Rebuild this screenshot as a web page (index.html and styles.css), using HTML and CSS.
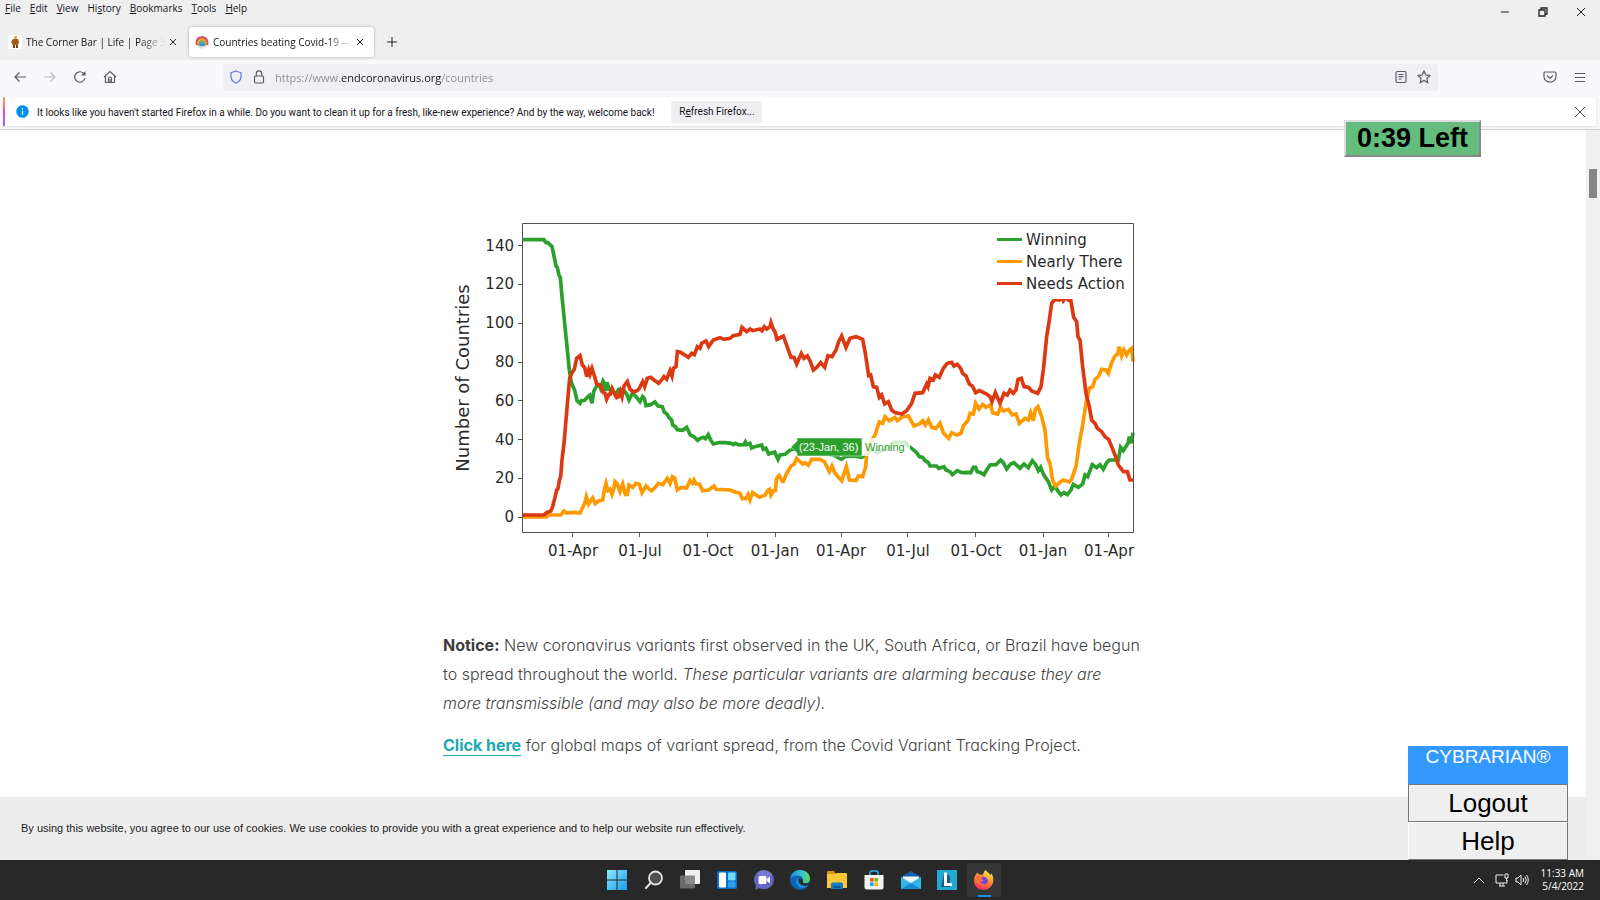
FILE: index.html
```html
<!DOCTYPE html>
<html lang="en">
<head>
<meta charset="utf-8">
<title>Countries beating Covid-19</title>
<link rel="stylesheet" href="styles.css">
</head>
<body>
<header class="browser">
  <div class="menubar">
    <nav class="menus">
      <button><u>F</u>ile</button><button><u>E</u>dit</button><button><u>V</u>iew</button><button>Hi<u>s</u>tory</button><button><u>B</u>ookmarks</button><button><u>T</u>ools</button><button><u>H</u>elp</button>
    </nav>
    <div class="window-controls">
      <button aria-label="Minimize"><svg width="10" height="10" viewBox="0 0 10 10"><path d="M1 5h8"/></svg></button>
      <button aria-label="Restore"><svg width="10" height="10" viewBox="0 0 10 10"><path d="M1 3h6v6H1zM3 3V1h6v6H7" stroke-width="1.3"/></svg></button>
      <button aria-label="Close"><svg width="10" height="10" viewBox="0 0 10 10"><path d="M1 1l8 8M9 1L1 9"/></svg></button>
    </div>
  </div>
  <div class="tabs">
    <div class="tab">
      <svg class="favicon" width="14" height="14" viewBox="0 0 14 14"><rect width="14" height="14" fill="#fff"/><path d="M6 1h3v3H6z" fill="#d8b060"/><path d="M5 4h5l1 3-1 3H5L3 7z" fill="#a35a12"/><path d="M5 10h2v3H5zM8 10h2v3H8z" fill="#704018"/></svg>
      <span class="tab-title">The Corner Bar | Life | Page 3100</span>
      <button class="tab-close" aria-label="Close tab"><svg width="8" height="8" viewBox="0 0 8 8"><path d="M1 1l6 6M7 1L1 7"/></svg></button>
    </div>
    <div class="tab active">
      <svg class="favicon" width="14" height="14" viewBox="0 0 14 14"><circle cx="7" cy="7" r="6.7" fill="#e8e2e5"/><path d="M1 10A6.4 6.4 0 1 1 13 10z" fill="#d94860"/><path d="M2.5 10.500A5 5 0 1 1 11.500 10.500z" fill="#f2a132"/><path d="M4 11A3.600 3.600 0 1 1 10 11z" fill="#6cb36a"/><path d="M5 11.300A2.600 2.600 0 1 1 9 11.300z" fill="#4296dd"/></svg>
      <span class="tab-title">Countries beating Covid-19 — E</span>
      <button class="tab-close" aria-label="Close tab"><svg width="8" height="8" viewBox="0 0 8 8"><path d="M1 1l6 6M7 1L1 7"/></svg></button>
    </div>
    <button class="new-tab" aria-label="New tab"><svg width="12" height="12" viewBox="0 0 12 12"><path d="M6 1v10M1 6h10"/></svg></button>
  </div>
  <div class="navbar">
    <div class="nav-buttons">
      <button aria-label="Back"><svg width="14" height="14" viewBox="0 0 14 14"><path d="M13 7H2M6.500 2.500L2 7l4.500 4.500"/></svg></button>
      <button aria-label="Forward" disabled><svg width="14" height="14" viewBox="0 0 14 14"><path d="M1 7h11M7.500 2.500L12 7l-4.500 4.500"/></svg></button>
      <button aria-label="Reload"><svg width="14" height="14" viewBox="0 0 14 14"><path d="M12 8a5.200 5.200 0 1 1-1.500-4.800L12 4.700"/><path d="M12.500 1v4.500H8z" fill="#5b5b66" stroke="none"/></svg></button>
      <button aria-label="Home"><svg width="14" height="14" viewBox="0 0 14 14"><path d="M1 7l6-5.500L13 7M2.500 6v6.500h9V6M5.500 12V8.500a1.500 1.500 0 0 1 3 0V12"/><path d="M7 9v3"/></svg></button>
    </div>
    <div class="urlbar">
      <svg width="14" height="14" viewBox="0 0 14 14"><path d="M7 1l5 1.800v3.700C12 10 9.500 12 7 13.200 4.500 12 2 10 2 6.500V2.800z" stroke="#6a70e8"/></svg>
      <svg width="14" height="14" viewBox="0 0 14 14"><rect x="2.500" y="6" width="9" height="7" rx="1.200"/><path d="M4.300 6V3.500a2.700 2.700 0 0 1 5.400 0V6"/></svg>
      <input class="url" type="text" aria-label="Address" value="https://www.endcoronavirus.org/countries">
      <button aria-label="Reader view"><svg width="14" height="14" viewBox="0 0 14 14"><rect x="2" y="1.500" width="10" height="11" rx="1.500"/><path d="M4.500 4.500h5M4.500 6.700h5M4.500 9h3"/></svg></button>
      <button aria-label="Bookmark"><svg width="14" height="14" viewBox="0 0 14 14"><path d="M7 1l1.800 3.900 4.200.5-3.100 2.900.8 4.300L7 10.500l-3.700 2.100.8-4.300L1 5.400l4.200-.5z"/></svg></button>
    </div>
    <div class="nav-end">
      <button aria-label="Pocket"><svg width="14" height="14" viewBox="0 0 14 14"><path d="M2 2h10a1 1 0 0 1 1 1v3.500a6 5.700 0 0 1-12 0V3a1 1 0 0 1 1-1zM4 5.500l3 2.800 3-2.800"/></svg></button>
      <button aria-label="Application menu"><svg width="12" height="12" viewBox="0 0 12 12"><path d="M1 2.500h10M1 6.500h10M1 10.500h10"/></svg></button>
    </div>
  </div>
  <div class="notice-wrap">
    <div class="notification">
      <svg width="13" height="13" viewBox="0 0 13 13"><circle cx="6.500" cy="6.500" r="6.300" fill="#0090ed"/><path d="M6.500 5.800v4M6.500 3v1.500" stroke="#fff" stroke-width="1.300"/></svg>
      <span class="notification-text">It looks like you haven't started Firefox in a while. Do you want to clean it up for a fresh, like-new experience? And by the way, welcome back!</span>
      <button class="refresh">R<u>e</u>fresh Firefox...</button>
      <button class="dismiss" aria-label="Dismiss"><svg width="12" height="12" viewBox="0 0 12 12"><path d="M1 1l10 10M11 1L1 11"/></svg></button>
    </div>
  </div>
</header>

<div class="viewport">
  <div class="page">
    <main class="article">
      <svg class="chart" viewBox="443 210 700 360" role="img" aria-label="Number of countries by status">
        <g class="series" transform="translate(440 210) scale(.33333)">
          <g stroke="#2ca02c">
            <polyline points="247,89 312,89 318,98 324,98 332,106 336,110 342,138 348,168 352,172 357,196 361,202 366,260 374,340 382,420 388,480 394,518 404,540 411,572 420,580 424,572 434,571 442,562 449,556 456,580 461,545 470,528 478,525 482,535 489,513 493,520 497,543 501,517 508,538 518,545 527,552 536,538 545,538 552,542 560,552 567,570 578,548 588,560 600,575 608,560 613,565 618,587 632,584 645,576 654,588 667,590 673,607 680,611 688,624 695,630 698,645 706,650 712,659 728,661 740,652 751,675 762,680 773,691 781,685 790,682 796,686 805,674 812,690 820,702 836,698 856,698 874,700 880,704 886,700 897,705 912,704 916,696 920,704 930,700 935,714 945,710 965,705 970,718 978,715 986,732 1004,726 1014,748 1020,735 1035,733 1053,718"/>
            <polyline transform="translate(1020)" points="33,718 60,715 100,725 160,735 184,748 195,740 220,738 245,742 262,733 272,718 290,728 310,720 325,715 340,697 375,697 385,708 395,715 410,728 418,740 428,742 435,752 445,758 450,768 470,768 476,775 492,770 498,780 510,785 517,794 532,782 545,788 563,787 572,788 580,772 587,772 592,785 600,787 612,794 620,780 630,765 648,764 662,750 670,758 680,777 692,762 702,758 720,775 732,762 745,773 757,752 767,764 775,782 782,772 792,796 805,815 815,840 825,828 833,842 843,855 852,848 862,854 873,840 880,823 895,832 908,822 915,795 923,800 937,764 950,773 960,764 970,778 980,758 988,750 1015,750 1022,712 1030,722 1044,700 1048,680 1054,700 1059,668"/>
          </g>
          <g stroke="#ff9900">
            <polyline points="247,921 320,921 322,915 362,915 372,903 380,909 398,907 420,909 428,892 434,880 439,860 446,882 458,864 466,881 476,873 488,870 494,835 498,820 504,842 510,838 516,853 521,838 525,815 532,822 540,845 548,822 556,853 562,853 567,825 578,832 588,820 598,823 606,848 618,828 628,838 635,842 646,832 655,820 668,824 682,805 690,820 697,800 704,804 712,840 724,832 740,834 750,812 757,820 762,810 768,822 778,822 788,842 806,840 822,828 828,838 870,840 888,847 900,850 907,866 918,866 924,854 930,870 938,848 958,862 975,856 985,840 989,838 993,855 1000,843 1006,842 1010,805 1017,797 1030,818"/>
            <polyline transform="translate(1020)" points="8,818 20,790 33,768 42,763 50,745 68,762 75,758 85,766 95,748 120,748 133,755 148,785 156,768 165,790 185,812 199,770 208,810 228,812 235,798 248,800 257,770 260,735 268,705 285,675 298,636 308,640 315,620 328,632 345,622 352,632 368,620 385,618 402,648 418,642 428,632 436,645 445,630 455,652 468,655 480,640 490,668 506,685 515,668 530,675 543,670 550,648 565,630 570,610 580,612 587,580 597,597 608,583 618,592 632,585 638,608 653,612 662,592 670,603 685,598 697,615 708,612 718,640 735,625 745,630 752,608 760,632 766,598 774,590 785,620 795,660 803,745 810,760 818,812 827,828 838,818 850,810 868,816 875,808 888,770 898,700 908,645 918,580 928,535 938,530 945,508 955,500 965,478 978,480 985,490 995,458 1005,438 1013,432 1018,410 1025,438 1032,420 1040,435 1048,420 1055,415 1059,455"/>
          </g>
          <g stroke="#dc3912">
            <polyline points="247,915 312,915 320,908 332,903 338,890 345,862 350,840 354,836 358,812 362,800 366,750 372,700 378,630 384,560 389,505 396,488 403,478 410,445 420,437 427,465 434,472 440,500 446,480 450,493 456,475 464,500 470,522 482,526 490,548 495,550 500,568 507,553 510,553 516,535 523,550 530,563 536,560 541,545 546,560 552,528 562,515 570,538 580,545 592,542 598,535 608,515 614,530 622,505 632,502 642,510 656,520 666,508 672,500 680,508 690,482 696,498 700,475 708,470 712,425 722,427 738,437 745,442 755,430 763,434 772,410 780,415 785,400 798,393 806,410 820,390 840,383 852,388 870,385 880,377 900,373 906,352 920,365 930,357 938,362 960,357 966,362 973,350 980,357 990,350 993,338 1000,358 1005,365 1011,388 1028,380"/>
            <polyline transform="translate(1020)" points="-9,388 10,378 33,442 42,442 50,462 64,430 72,445 82,438 90,452 100,480 110,472 122,458 134,472 144,437 156,440 168,420 176,395 185,378 198,412 210,385 228,380 248,388 256,430 266,497 272,495 280,530 290,532 298,562 305,555 314,582 325,575 335,600 345,608 365,612 380,602 395,580 405,550 428,548 440,522 444,530 450,505 460,510 466,495 478,502 490,475 502,460 515,457 522,468 532,463 542,475 548,490 558,498 568,522 577,528 587,548 598,542 620,552 630,560 636,575 646,548 660,580 672,550 682,555 690,540 700,550 708,540 714,508 724,505 732,530 745,532 755,543 773,550 783,530 790,480 800,380 808,330 815,280 825,268 838,270 845,260 850,272 858,260 865,270 872,268 881,322 890,335 894,380 900,390 908,470 918,550 928,590 935,630 945,640 952,655 965,665 975,680 986,688 995,710 1005,735 1015,765 1030,785 1042,785 1050,810 1059,810"/>
          </g>
        </g>
        <rect x="990" y="228" width="142" height="71" fill="#fff"/>
        <g class="axes">
          <path d="M522.500 223.500h611v309h-611z"/>
          <path d="M518 245.500h4M518 284.500h4M518 323.500h4M518 362.500h4M518 400.500h4M518 439.500h4M518 478.500h4M518 517.500h4"/>
          <path d="M572.500 533v4M639.500 533v4M707.500 533v4M775.500 533v4M841.500 533v4M907.500 533v4M975.500 533v4M1043.500 533v4M1108.500 533v4"/>
        </g>
        <g class="labels" text-anchor="end">
          <text x="514" y="251">140</text><text x="514" y="289">120</text><text x="514" y="328">100</text><text x="514" y="367">80</text><text x="514" y="406">60</text><text x="514" y="445">40</text><text x="514" y="483">20</text><text x="514" y="522">0</text>
        </g>
        <g class="labels" text-anchor="middle">
          <text x="573" y="556">01-Apr</text><text x="640" y="556">01-Jul</text><text x="708" y="556">01-Oct</text><text x="775" y="556">01-Jan</text><text x="841" y="556">01-Apr</text><text x="908" y="556">01-Jul</text><text x="976" y="556">01-Oct</text><text x="1043" y="556">01-Jan</text><text x="1109" y="556">01-Apr</text>
        </g>
        <text class="axis-title" transform="translate(469 378) rotate(-90)" text-anchor="middle">Number of Countries</text>
        <g stroke-width="3">
          <path d="M997 239.500h25" stroke="#2ca02c"/><path d="M997 261.500h25" stroke="#ff9900"/><path d="M997 283.500h25" stroke="#dc3912"/>
        </g>
        <g class="labels"><text x="1026" y="245">Winning</text><text x="1026" y="267">Nearly There</text><text x="1026" y="289">Needs Action</text></g>
        <rect x="862" y="438" width="48" height="18" fill="#fff" opacity=".8"/>
        <path d="M791 447l6-6v-3h65v18h-65v-3z" fill="#2ca02c" stroke="#fff" stroke-width=".5"/>
        <g class="hover-text"><text x="799" y="451" fill="#fff">(23-Jan, 36)</text><text x="865" y="451" fill="#2ca02c">Winning</text></g>
      </svg>
      <p class="first"><strong>Notice:</strong> New coronavirus variants first observed in the UK, South Africa, or Brazil have begun to spread throughout the world. <em>These particular variants are alarming because they are more transmissible (and may also be more deadly).</em></p>
      <p><a href="#variants">Click here</a> for global maps of variant spread, from the Covid Variant Tracking Project.</p>
    </main>
    <footer class="cookies">By using this website, you agree to our use of cookies. We use cookies to provide you with a great experience and to help our website run effectively.</footer>
  </div>
  <div class="scrollbar"><div class="thumb"></div></div>
  <aside class="cybrarian">
    <div class="brand">CYBRARIAN®</div>
    <button>Logout</button>
    <button>Help</button>
  </aside>
</div>
<div class="timer">0:39 Left</div>

<footer class="taskbar">
  <div class="apps">
    <button aria-label="Start"><svg viewBox="0 0 20 20"><defs><linearGradient id="win" x2="1" y2="1"><stop stop-color="#8beaff"/><stop offset="1" stop-color="#159bed"/></linearGradient></defs><path d="M0 0h9.500v9.500H0zM10.500 0H20v9.500h-9.500zM0 10.500h9.500V20H0zM10.500 10.500H20V20h-9.500z" fill="url(#win)"/></svg></button>
    <button aria-label="Search"><svg viewBox="0 0 20 20"><circle cx="11.500" cy="8" r="6.500" fill="#505050" stroke="#e4e4e4" stroke-width="1.800"/><path d="M7 12.500L2 18" stroke="#e4e4e4" stroke-width="2" stroke-linecap="round"/></svg></button>
    <button aria-label="Task view"><svg viewBox="0 0 20 20"><rect x="5" width="15" height="14" rx="1" fill="#f0f0f0"/><rect y="5.500" width="15" height="13" rx="1" fill="#777" opacity=".85"/></svg></button>
    <button aria-label="Widgets"><svg viewBox="0 0 20 20"><rect y="1" width="20" height="18" rx="1.500" fill="#0b6dc5"/><rect x="2" y="2.500" width="7" height="15" rx="1" fill="#fff"/><rect x="11" y="2.500" width="7.500" height="8" rx="1" fill="#6bdcff"/><rect x="11" y="11.500" width="7.500" height="6" rx="1" fill="#2ba3ef"/></svg></button>
    <button aria-label="Chat"><svg viewBox="0 0 20 20"><path d="M10 0a10 9.600 0 1 1-4.500 18.200L1 19.500l1-4.200A10 9.600 0 0 1 10 0z" fill="#6264c3"/><path d="M4 2.500a10 9.600 0 0 1 14 2L6 17z" fill="#8f91df" opacity=".5"/><rect x="4.500" y="6" width="8" height="8" rx="1.500" fill="#fff"/><path d="M13 9l3-2.500v7L13 11z" fill="#fff"/></svg></button>
    <button aria-label="Edge"><svg viewBox="0 0 20 20"><defs><linearGradient id="edge" x2="1"><stop stop-color="#168bd9"/><stop offset=".55" stop-color="#35c1d5"/><stop offset="1" stop-color="#65d849"/></linearGradient></defs><circle cx="10" cy="10" r="10" fill="#0d63b4"/><path d="M0 9C1 3 5 0 10 0c6 0 10 4 10 8.500 0 3.500-3 5-6 4.800-1.500 0-2-.8-1.300-1.600C14 9 12 5.500 7.500 5.500 4 5.500 1 7 0 9z" fill="url(#edge)"/><path d="M7 8c-3 6 2 10.500 7 10a10 10 0 0 0 4.500-3C14 17 9 15 9 11z" fill="#1490df"/><path d="M9.200 8.700c-2 3 .8 7 6 7l3.500-.7.800-2.500C17 14 13 13.500 12.700 12c1-2-1.500-4.500-3.500-3.300z" fill="#2b2b2b"/></svg></button>
    <button aria-label="File Explorer"><svg viewBox="0 0 20 20"><path d="M0 2a1 1 0 0 1 1-1h6l2 3H0z" fill="#d89412"/><path d="M0 4h8l2-1h9a1 1 0 0 1 1 1v14H0z" fill="#fbc936"/><path d="M4 19v-5a1.500 1.500 0 0 1 1.500-1.500h9A1.500 1.500 0 0 1 16 14v5z" fill="#147bc5"/><path d="M6.500 16h7v2h-7z" fill="#0b579c"/></svg></button>
    <button aria-label="Microsoft Store"><svg viewBox="0 0 20 20"><path d="M6 5V2.500A1.500 1.500 0 0 1 7.500 1h5A1.500 1.500 0 0 1 14 2.500V5" fill="none" stroke="#27b4ee" stroke-width="1.600"/><path d="M.5 5h19v12a2.500 2.500 0 0 1-2.500 2.500H3A2.500 2.500 0 0 1 .5 17z" fill="#f2f2f2"/><path d="M6 8h3.600v3.600H6z" fill="#ef5026"/><path d="M10.400 8H14v3.600h-3.600z" fill="#7db900"/><path d="M6 12.400h3.600V16H6z" fill="#15a4eb"/><path d="M10.400 12.400H14V16h-3.600z" fill="#fdb900"/></svg></button>
    <button aria-label="Mail"><svg viewBox="0 0 20 20"><path d="M0 7l10-6 10 6v3H0z" fill="#1460ad"/><path d="M2 6.500h16V13H2z" fill="#f0f5f9"/><path d="M0 7l10 6 10-6v12H0z" fill="#31b5eb"/><path d="M0 19l10-6 10 6z" fill="#168bd4"/></svg></button>
    <button aria-label="L"><svg viewBox="0 0 20 20"><path d="M0 0h20v20H0z" fill="#23a8d4"/><path d="M7 3L4 17h9V6z" fill="#165d85"/><path d="M7 2.500h3V13h5v3H7z" fill="#fff"/></svg></button>
    <button class="current" aria-label="Firefox"><svg viewBox="0 0 20 20"><defs><linearGradient id="fox" x1=".7" x2=".3" y2="1"><stop stop-color="#ffe94a"/><stop offset=".5" stop-color="#ff8a26"/><stop offset="1" stop-color="#f52469"/></linearGradient></defs><path d="M11.500 0c1 2 4 3 5 5l1-1.500c2 3 2.200 6.500 1.500 9-1.200 4.500-5 7.500-9.500 7.500C4 20 0 16 0 10.500 0 7.500 1 5.500 2.500 4L3 2.500l2 2c2 0 3 .2 4 .5.300-2 1.200-3.800 2.500-5z" fill="url(#fox)"/><path d="M5 8c2-2 5-2 7.500 0 2.500 2.200 1.500 6-2 6.500-2.500.3-4.500-1-4.800-3.500l2.500.5L9.500 10z" fill="#7542dc"/><path d="M2 6c3-1 5.500-.5 6.500 1.500L6 9.500c-.5 3 2 5 5 4.500-3 3-8 1-8.500-3z" fill="#ff7139"/></svg></button>
  </div>
  <div class="tray">
    <button aria-label="Show hidden icons"><svg width="12" height="12" viewBox="0 0 12 12"><path d="M1 9l5-5 5 5"/></svg></button>
    <button class="status" aria-label="Network and volume"><svg width="14" height="14" viewBox="0 0 14 14"><path d="M8.500 2H1v8h11V7M4 13h6M5 10v3M8 10v3M10 1h3v4h-3zM11.500 5v3"/></svg><svg width="14" height="14" viewBox="0 0 14 14"><path d="M1 5h2l3-3v10L3 9H1zM8 5q1.500 2 0 4M10 3.500q2.500 3.500 0 7M11.500 2q3.500 5 0 10"/></svg></button>
    <div class="clock"><time>11:33 AM</time><time>5/4/2022</time></div>
  </div>
</footer>
</body>
</html>
```
FILE: styles.css
```css
* { box-sizing: border-box; }
body {
  margin: 0;
  height: 100vh;
  display: flex;
  flex-direction: column;
  position: relative;
  overflow: hidden;
  background: #fff;
  font-family: "Open Sans", "Noto Sans", sans-serif;
  font-size: 11px;
  color: #15141a;
}
button {
  border: 0;
  padding: 0;
  background: none;
  font: inherit;
  color: inherit;
  display: inline-flex;
  align-items: center;
  justify-content: center;
}
svg { display: block; flex: none; }
.browser { background: #efefef; flex: none; }
.menubar { display: flex; justify-content: space-between; height: 24px; }
.menus { display: flex; align-items: flex-start; gap: 9px; padding-left: 5px; line-height: 16px; font-size: 10px; }
.menus button { display: block; }
u { text-underline-offset: 1px; }
.window-controls { display: flex; gap: 28px; padding-right: 14px; }
.window-controls svg, .tab-close svg, .new-tab svg { fill: none; stroke: #222; stroke-width: 1; }
.tabs { display: flex; align-items: center; height: 36px; padding: 0 4px; }
.tab { display: flex; align-items: center; width: 185px; height: 30px; padding: 0 12px 0 4px; gap: 4px; border-radius: 3px; font-size: 10px; }
.tab.active { background: #fff; box-shadow: 0 0 3px #aaa; padding: 0 10px 0 6px; }
.tab-title {
  flex: 1;
  min-width: 0;
  line-height: 16px;
  white-space: nowrap;
  mask-image: linear-gradient(to right, #000 82%, transparent);
}
.new-tab { margin-left: 12px; }
.navbar { display: flex; align-items: center; height: 37px; padding: 3px 14px 6px 13px; background: #f9f9fb; }
.navbar svg { fill: none; stroke: #5b5b66; stroke-width: 1.2; }
.nav-buttons { display: flex; gap: 16px; width: 210px; }
.nav-buttons button:disabled { opacity: .4; }
.urlbar { flex: 1; display: flex; align-items: center; gap: 9px; height: 27px; padding: 0 7px 0 6px; background: #f0f0f4; border-radius: 3px; }
.url {
  flex: 1;
  border: 0;
  outline: 0;
  padding: 0;
  height: 20px;
  margin-right: 4px;
  font: 11px "Open Sans", sans-serif;
  color: transparent;
  background: linear-gradient(to right, #8a8a92 65px, #15141a 65px, #15141a 166px, #8a8a92 166px);
  background-clip: text;
  -webkit-background-clip: text;
}
.nav-end { display: flex; gap: 17px; padding-left: 105px; }
.notice-wrap { background: #f9f9fb; border-bottom: 1px solid #ccc; padding: 0 4px 3px 3px; }
.notification {
  display: flex;
  align-items: center;
  height: 29px;
  padding: 0 10px 0 11px;
  background: #fff;
  border-left: 2px solid;
  border-image: linear-gradient(#ffad50, #f54bb4, #9760ff) 1;
  box-shadow: 0 1px 2px #ddd;
}
.notification-text { padding: 2px 0 0 8px; font-family: Roboto, sans-serif; font-size: 10px; line-height: 16px; }
.refresh { display: block; margin-left: 17px; width: 91px; height: 22px; border-radius: 2px; background: #efeff2; font-family: Roboto, sans-serif; font-size: 10px; }
.dismiss { margin-left: auto; }
.dismiss svg { stroke: #444; fill: none; }
.viewport { flex: 1; min-height: 0; display: flex; position: relative; }
.page { flex: 1; display: flex; flex-direction: column; }
.article {
  flex: 1;
  width: 100%;
  max-width: 700px;
  margin: 0 auto;
  padding-top: 80px;
  min-height: 0;
  font-family: Inter, Lato, sans-serif;
  font-size: 16px;
  font-weight: 300;
  font-feature-settings: "cv11";
  line-height: 29px;
  color: #444;
}
.article p { margin: 0 0 13px; }
.article .first { margin-top: 61px; }
.article strong { color: #3c3c3c; font-weight: 700; }
.article a { color: #20a8b2; font-weight: 700; text-decoration: none; border-bottom: 1px solid #20a8b2; }
.chart { width: 100%; }
.series { fill: none; stroke-width: 11; }
.axes { fill: none; stroke: #555; stroke-width: 1; }
.labels { font: 15px "DejaVu Sans", sans-serif; fill: #2a2a2a; }
.axis-title { font: 18px "DejaVu Sans", sans-serif; fill: #2a2a2a; }
.hover-text { font: 11px "Liberation Sans", sans-serif; }
.cookies { height: 63px; padding: 0 21px 2px; background: #ededed; display: flex; align-items: center; font: 11px "Liberation Sans", sans-serif; color: #222; }
.scrollbar { width: 14px; background: #f0f0f0; padding: 39px 3px; }
.thumb { height: 29px; background: #858585; }
.timer {
  position: absolute;
  top: 120px;
  right: 119px;
  width: 137px;
  height: 37px;
  border: 2px outset #ddd;
  background: #64bd7c;
  color: #000;
  font: bold 27px/33px "Liberation Sans", sans-serif;
  text-align: center;
}
.cybrarian { position: absolute; right: 32px; bottom: 0; width: 160px; font-family: "Liberation Sans", sans-serif; }
.brand { height: 38px; background: #3399ff; color: #fff; font-size: 19px; line-height: 22px; text-align: center; }
.cybrarian button { width: 100%; height: 38px; background: #efefef; border: 1px solid; border-color: #fff #777 #777 #fff; font-size: 26px; color: #000; }
.cybrarian .brand + button { border-color: #777; }
.taskbar { flex: none; height: 40px; display: flex; justify-content: center; position: relative; background: #282828; color: #fff; }
.apps { display: grid; grid-template-columns: repeat(11, 1fr); width: 404px; margin-left: 1px; }
.apps svg { width: 20px; height: 20px; }
.apps .current { margin: 3px 1px; border-radius: 4px; background: linear-gradient(#1490e8, #1490e8) center bottom / 13px 2px no-repeat, #353535; }
.tray { position: absolute; top: 0; right: 16px; height: 40px; display: flex; align-items: center; gap: 10px; }
.tray svg { fill: none; stroke: #eee; stroke-width: 1; }
.status { gap: 6px; }
.clock { display: flex; flex-direction: column; text-align: right; font-family: "Open Sans", sans-serif; font-size: 10px; line-height: 13px; padding-left: 2px; }
```
